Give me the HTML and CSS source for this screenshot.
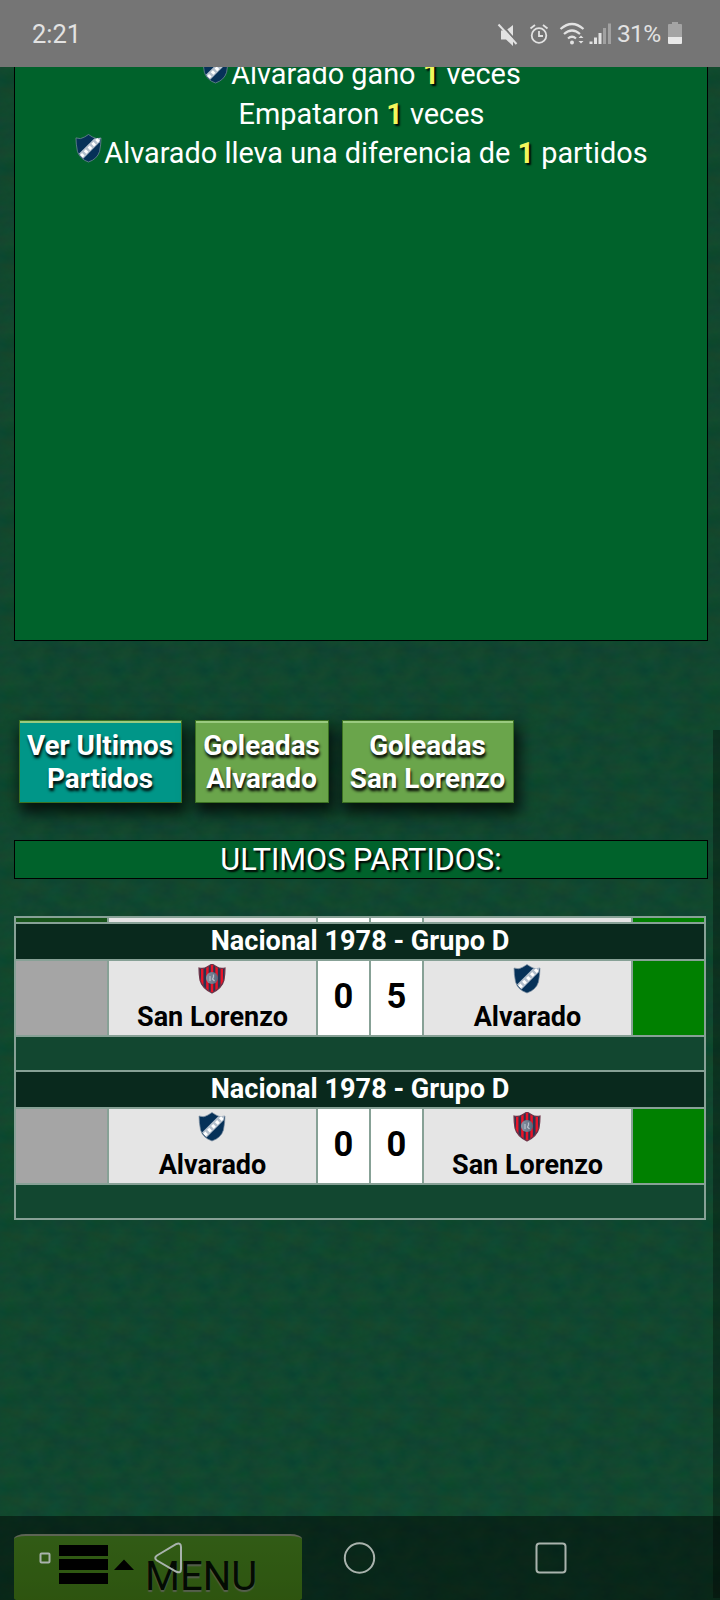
FILE: index.html
```html
<!DOCTYPE html>
<html lang="es">
<head>
<meta charset="utf-8">
<title>Historial</title>
<link rel="stylesheet" href="styles.css">
</head>
<body>
<svg class="defs" width="0" height="0">
  <defs>
    <linearGradient id="silver"><stop offset="0" stop-color="#8995a5"/><stop offset="1" stop-color="#596579"/></linearGradient>
    <clipPath id="shield"><path d="M1 4Q6 5 9 3L14 0L19 3Q22 5 27 4Q27 10 26 16Q24 24 14 29Q4 24 2 16Q1 10 1 4Z"/></clipPath>
    <symbol id="alvarado" viewBox="0 0 28 30">
      <path d="M1 4Q6 6 10 3L14 .5L18 3Q22 6 27 4Q27 10 25.500 18Q23 26 14 29Q5 26 2.500 18Q1 10 1 4Z" fill="#063158" stroke="#8090a4" stroke-width=".7"/>
      <path d="M4 20.500L20 4.500L26.500 4L25.500 8.500L8.500 25.500Z" fill="#b3bfcc"/>
      <path d="M6.500 23L25 5" stroke="#fff" stroke-width="3.800" stroke-dasharray="3 2.500"/>
    </symbol>
    <symbol id="lorenzo" viewBox="0 0 28 30">
      <g clip-path="url(#shield)">
        <rect width="28" height="30" fill="#293652"/>
        <path d="M4.200 0V30M9.400 0V30M14 0V30M18.600 0V30M23.800 0V30" stroke="#e91428" stroke-width="2.500"/>
      </g>
      <path d="M1 4Q6 5 9 3L14 0L19 3Q22 5 27 4Q27 10 26 16Q24 24 14 29Q4 24 2 16Q1 10 1 4Z" fill="none" stroke="#703449" stroke-width="1.200"/>
      <circle cx="14" cy="14" r="6" fill="url(#silver)"/>
      <path d="M12 12V17M15.500 10.500V13L14.500 15L16.500 17" fill="none" stroke="#b4bfca" stroke-width="1.300"/>
    </symbol>
  </defs>
</svg>
<div class="screen">
  <svg class="texture" width="720" height="1600">
    <defs>
      <filter id="cloth" filterUnits="userSpaceOnUse" x="0" y="0" width="88" height="88" color-interpolation-filters="sRGB">
        <feTurbulence type="fractalNoise" baseFrequency=".045 .07" numOctaves="4" seed="8" stitchTiles="stitch"/>
        <feColorMatrix values=".07 0 0 0 .031  0 .055 0 0 .25  0 0 .05 0 .16  0 0 0 0 1"/>
      </filter>
      <pattern id="tile" width="88" height="88" patternUnits="userSpaceOnUse"><rect width="88" height="88" filter="url(#cloth)"/></pattern>
    </defs>
    <rect width="720" height="1600" fill="url(#tile)"/>
  </svg>

  <header class="status">
    <span class="time">2:21</span>
    <svg class="tray" width="118" height="30" viewBox="0 0 118 30" fill="none" stroke="#e2e2e2">
      <path d="M4 9.500H9L16 4V25L9 18.500H4Z" fill="#e2e2e2" stroke="none"/>
      <path d="M3 2L21 22" stroke="#757575" stroke-width="2"/><path d="M1.500 3.500L19.500 23" stroke-width="2"/>
      <circle cx="42" cy="14.500" r="7.300" stroke-width="1.800"/><path d="M42 10V15H46M33.500 7.500L38 4M46 4L50.500 7.500" stroke-width="1.800"/>
      <path d="M63.500 8Q75-2 86.500 8M67 13Q75 6 83 13M71 17.500Q75 14 79 17.500" stroke-width="2.200"/>
      <circle cx="75" cy="21.500" r="2" fill="#e2e2e2" stroke="none"/><path d="M81.500 17L84 14.500L86.500 17ZM81.500 20L84 22.500L86.500 20Z" fill="#e2e2e2" stroke="none"/>
      <path d="M94 23V20.500M98.500 23V16.500M103 23V12" stroke-width="3"/><path d="M107.500 23V7M112.500 23V2.500" stroke="#a1a1a1" stroke-width="3"/>
    </svg>
    <span class="charge">31%</span>
    <svg class="battery" width="14" height="22" viewBox="0 0 14 22"><path d="M4 0H10V2H13Q14 2 14 3V15H0V3Q0 2 1 2H4Z" fill="#a4a4a4"/><path d="M0 15H14V21Q14 22 13 22H1Q0 22 0 21Z" fill="#e8e8e8"/></svg>
  </header>

  <main class="page">
    <section class="summary">
      <p><svg class="crest"><use href="#alvarado"/></svg>Alvarado gano <b>1</b> veces</p>
      <p>Empataron <b>1</b> veces</p>
      <p><svg class="crest"><use href="#alvarado"/></svg>Alvarado lleva una diferencia de <b>1</b> partidos</p>
    </section>

    <div class="tabs">
      <button class="tab tab-active">Ver Ultimos<br>Partidos</button>
      <button class="tab tab-mid">Goleadas<br>Alvarado</button>
      <button class="tab tab-last">Goleadas<br>San Lorenzo</button>
    </div>

    <h2 class="title">ULTIMOS PARTIDOS:</h2>

    <section class="matches">
      <div class="dark"></div><div class="team"></div><div class="score"></div><div class="score"></div><div class="team"></div><div class="win"></div>
      <h3>Nacional 1978 - Grupo D</h3>
      <div class="grey"></div>
      <div class="team"><svg class="badge"><use href="#lorenzo"/></svg><span>San Lorenzo</span></div>
      <div class="score">0</div><div class="score">5</div>
      <div class="team"><svg class="badge"><use href="#alvarado"/></svg><span>Alvarado</span></div>
      <div class="win"></div>
      <div class="spacer"></div>
      <h3>Nacional 1978 - Grupo D</h3>
      <div class="grey"></div>
      <div class="team"><svg class="badge"><use href="#alvarado"/></svg><span>Alvarado</span></div>
      <div class="score">0</div><div class="score">0</div>
      <div class="team"><svg class="badge"><use href="#lorenzo"/></svg><span>San Lorenzo</span></div>
      <div class="win"></div>
      <div class="spacer"></div>
    </section>
  </main>

  <div class="menu">
    <svg class="burger" width="76" height="40" viewBox="0 0 76 40"><path d="M0 0H49V11H0ZM0 14H49V25H0ZM0 28H49V39H0ZM55 25L65 14.500L75 25Z" fill="#000"/></svg>
    <span>MENU</span>
  </div>
  <div class="scrollbar"></div>
  <nav class="nav">
    <svg width="720" height="84" viewBox="0 0 720 84" fill="none" stroke="#a9b3ad" stroke-width="2">
      <rect x="40.500" y="37.500" width="9" height="9" rx="1"/>
      <path d="M157 39.500L176 28.200Q181 26 181 31V53Q181 58 176 55.500L157 44.500Q153.500 42 157 39.500Z"/>
      <circle cx="359.500" cy="42" r="14.700"/>
      <rect x="536.500" y="27.500" width="29" height="29" rx="3"/>
    </svg>
  </nav>
</div>
</body>
</html>
```
FILE: styles.css
```css
* { box-sizing: border-box; }
body { margin: 0; font-family: Roboto, sans-serif; background: #114630; }
p, h2, h3 { margin: 0; }
.defs { position: absolute; }
.screen { position: relative; width: 720px; height: 1600px; overflow: hidden; }
.texture { position: absolute; inset: 0; }

.status { position: relative; z-index: 2; display: flex; align-items: flex-start; height: 67px; padding-left: 32px; background: #757575; color: #e2e2e2; }
.time { width: 465px; padding-top: 19px; font-size: 25.500px; line-height: 30px; }
.tray { flex: none; margin-top: 21px; }
.charge { width: 53px; padding: 19px 0 0 2px; font-size: 24.500px; line-height: 30px; letter-spacing: -.7px; }
.battery { flex: none; margin-top: 22px; }

.page { position: relative; padding: 0 12px 0 14px; }
.summary { width: 694px; height: 588px; margin-top: -14px; padding: 0 0 0 1px; border: 1px solid #000; background: #00622b; color: #fff; font-size: 28.850px; line-height: 40px; text-align: center; }
.summary b { color: #f1f75d; text-shadow: 2px 2px 2px #000; }
.crest { width: 27px; height: 29px; margin-right: 2px; vertical-align: 0; }
.summary p { height: 39.500px; white-space: nowrap; }

.tabs { display: flex; gap: 13px; margin: 79px 0 37px 5px; }
.tab { width: 163px; height: 83px; padding: 1px 1px 0 0; border: 1px solid #3c7222; background: #6aa54b; box-shadow: inset 0 2px 0 #9aca7f, 3px 8px 14px 2px rgba(0, 0, 0, .75); color: #fff; font: bold 27.800px/33px Roboto, sans-serif; text-shadow: 1px 3px 3px #000; white-space: nowrap; }
.tab-active { background: #009688; }
.tab-mid { width: 134px; }
.tab-last { width: 172px; }

.title { width: 694px; height: 39px; margin-bottom: 37px; border: 1px solid #000; background: #00622b; color: #fff; font-size: 30.700px; font-weight: 400; line-height: 38px; text-align: center; text-shadow: 2px 2px 2px #000; }

.matches { display: grid; grid-template-columns: 91px 207px 51px 51px 207px 71px; grid-template-rows: 4px 35px 74px 33px 35px 74px 33px; gap: 2px; width: 692px; padding: 2px; background: #87a196; color: #000; font-weight: 700; text-align: center; }
.matches h3 { grid-column: 1 / -1; background: #09291d; color: #fff; font-size: 27.100px; line-height: 35px; }
.spacer { grid-column: 1 / -1; background: #124730; }
.dark { background: #17541a; }
.grey { background: #a5a5a5; }
.win { background: #008000; }
.team { display: flex; flex-direction: column; align-items: center; overflow: hidden; background: #e5e5e5; font-size: 27px; line-height: 32px; }
.badge { flex: none; width: 28px; height: 30px; margin: 3px 1px 7px 0; }
.team span { line-height: 32px; }
.score { overflow: hidden; background: #fff; font-size: 34.500px; line-height: 71px; }

.menu { position: absolute; left: 14px; top: 1534px; display: flex; width: 288px; height: 66px; padding: 10px 0 0 45px; border-top: 2px solid #aab69a; border-radius: 12px 12px 4px 4px / 5px 5px 2px 2px; background: linear-gradient(#5aa728, #549a1d); color: #071504; }
.menu span { margin: -2px 0 0 10px; font-size: 40px; line-height: 66px; text-shadow: 0 2px 1px #9cad8c; }
.burger { flex: none; margin-top: -1px; }
.scrollbar { position: absolute; left: 713px; top: 730px; width: 7px; height: 868px; background: rgba(0, 0, 0, .3); }
.nav { position: absolute; left: 0; top: 1516px; width: 720px; height: 84px; background: rgba(0, 0, 0, .45); }
```
